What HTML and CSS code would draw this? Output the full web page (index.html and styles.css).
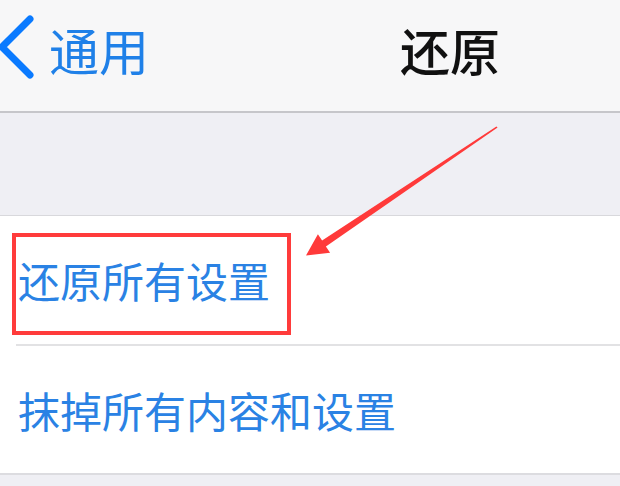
FILE: index.html
```html
<!DOCTYPE html>
<html lang="zh-CN">
<head>
    <meta charset="UTF-8">
    <meta name="viewport" content="width=device-width, initial-scale=1.0">
    <title>还原</title>
    <link rel="stylesheet" href="styles.css">
</head>
<body>
    <div class="screen">
        <div class="navbar">
            <div class="back">
                <svg class="chevron" width="40" height="64" viewBox="0 0 40 64">
                    <polyline points="33,4 5,32 33,60" fill="none" stroke="#0a7aff" stroke-width="7" stroke-linecap="round" stroke-linejoin="round"/>
                </svg>
                <span class="back-label">通用</span>
            </div>
            <div class="title">还原</div>
        </div>

        <div class="spacer"></div>

        <div class="list">
            <div class="row">还原所有设置</div>
            <div class="row">抹掉所有内容和设置</div>
        </div>

        <div class="footer"></div>

        <!-- annotation drawn over the screenshot -->
        <div class="highlight"></div>
        <svg class="arrow" width="620" height="486" viewBox="0 0 620 486">
            <polygon points="497.6,127.4 325.9,246.4 330.1,252.7 306,255.5 317.9,234.3 322.1,240.6 496.4,126.6" fill="#ff3a3a"/>
        </svg>
    </div>
</body>
</html>
```

FILE: styles.css
```css
* {
    margin: 0;
    padding: 0;
    box-sizing: border-box;
}

body {
    font-family: "Noto Sans CJK SC", "Noto Sans", sans-serif;
    background: #efeff4;
    width: 620px;
    height: 486px;
    overflow: hidden;
}

.screen {
    position: relative;
    width: 620px;
    height: 486px;
    display: flex;
    flex-direction: column;
}

.navbar {
    height: 113px;
    background: #f7f7f8;
    border-bottom: 2px solid #c6c6ca;
    display: flex;
    align-items: center;
    justify-content: space-between;
    padding: 0 120px 14px 0;
}

.back {
    display: flex;
    align-items: center;
    gap: 12px;
}

.chevron {
    margin-left: -3px;
    margin-top: -4px;
}

.back-label {
    color: #1f80e8;
    font-size: 50px;
    line-height: 1;
}

.title {
    color: #111;
    font-size: 50px;
    font-weight: 500;
    line-height: 1;
}

.spacer {
    height: 103px;
    background: #efeff4;
    border-bottom: 1px solid #d8d8dc;
}

.list {
    background: #fff;
    border-bottom: 2px solid #dcdce0;
    padding-left: 16px;
}

.row {
    height: 128px;
    display: flex;
    align-items: center;
    padding-left: 2px;
    color: #2a82e4;
    font-size: 42px;
    line-height: 1;
}

.row + .row {
    border-top: 2px solid #e2e2e4;
    height: 129px;
}

.footer {
    flex: 1;
    background: #efeff4;
}

.highlight {
    position: absolute;
    left: 12px;
    top: 233px;
    width: 279px;
    height: 102px;
    border: 4px solid #ff3b3b;
}

.arrow {
    position: absolute;
    left: 0;
    top: 0;
}
```
